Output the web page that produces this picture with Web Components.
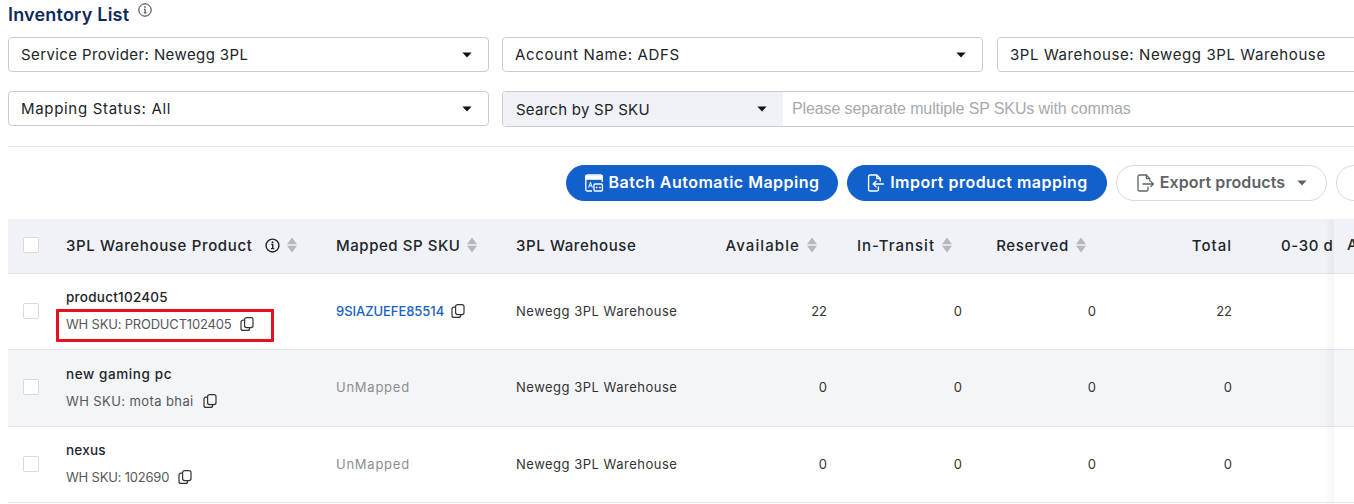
<!DOCTYPE html>
<html>
<head>
<meta charset="utf-8">
<title>Inventory List</title>
<style>
  html, body { margin: 0; padding: 0; background: #fff; overflow: hidden; }
  body { width: 1354px; height: 504px; font-family: "Inter", "Liberation Sans", sans-serif; color: #212529; }
</style>
</head>
<body>
<inv-page></inv-page>

<script>
const ICONS = {
  copy: `<svg width="16" height="16" viewBox="0 0 16 16" fill="none" stroke="currentColor" stroke-width="1.2" stroke-linejoin="round"><rect x="5.6" y="1.6" width="8.4" height="10" rx="2"/><path d="M5.6 4.2H4a2 2 0 0 0-2 2V12.4a2 2 0 0 0 2 2h4.6a2 2 0 0 0 2-2v-.8"/></svg>`,
  sort: `<svg width="12" height="16" viewBox="0 0 12 16" fill="#b4b7bd"><path d="M6 .5l5 6.8H1zM6 15.5L1 8.7h10z"/></svg>`,
  caret: `<svg width="10" height="6" viewBox="0 0 10 6" fill="currentColor"><path d="M0.4 0.6h9.2L5 5.6z"/></svg>`,
  info: `<svg width="14" height="14" viewBox="0 0 14 14" fill="none" stroke="currentColor"><circle cx="7" cy="7" r="6.2" stroke-width="1"/><path d="M6 6.2h1.1v3.6M5.8 9.9h2.6" stroke-width="1"/><circle cx="7" cy="4.1" r=".8" fill="currentColor" stroke="none"/></svg>`,
  infoBold: `<svg width="15" height="15" viewBox="0 0 14 14" fill="none" stroke="currentColor"><circle cx="7" cy="7" r="6" stroke-width="1.3"/><path d="M5.9 6.1h1.3v3.7M5.6 9.9h3" stroke-width="1.3"/><circle cx="7" cy="3.9" r=".95" fill="currentColor" stroke="none"/></svg>`,
  batch: `<svg width="20" height="20" viewBox="0 0 20 20" fill="none" stroke="#fff" stroke-width="1.3"><path d="M8 18H3.4A1.6 1.6 0 0 1 1.8 16.4V3.4A1.6 1.6 0 0 1 3.4 1.8h13.2a1.6 1.6 0 0 1 1.6 1.6V9"/><path d="M2 3h16v3.2H2z" fill="#fff"/><path d="M4.6 14.6l1.9-5.2 1.9 5.2M5.3 12.8h2.4" stroke-width="1"/><rect x="10" y="11" width="8.4" height="7" rx="1" fill="#1160cc"/><path d="M11.8 14.5h1.8M15 14.5h1.8M12.7 13.6v1.8M15.9 13.6v1.8" stroke-width=".9"/></svg>`,
  import: `<svg width="20" height="20" viewBox="0 0 20 20" fill="none" stroke="#fff" stroke-width="1.4" stroke-linecap="round" stroke-linejoin="round"><path d="M11.8 2H5.2A1.6 1.6 0 0 0 3.6 3.6v12.8A1.6 1.6 0 0 0 5.2 18h6.6a1.6 1.6 0 0 0 1.6-1.6V14M11.8 2l3.4 3.6V8M11.8 2v3.6h3.4"/><path d="M18.4 11H8.4M11 8.2L8.2 11l2.8 2.8"/></svg>`,
  export: `<svg width="20" height="20" viewBox="0 0 20 20" fill="none" stroke="currentColor" stroke-width="1.3" stroke-linecap="round" stroke-linejoin="round"><path d="M11.4 2H4.6A1.6 1.6 0 0 0 3 3.6v12.8A1.6 1.6 0 0 0 4.6 18h6.8a1.6 1.6 0 0 0 1.6-1.6V14M11.4 2l3.4 3.6V8M11.4 2v3.6h3.4"/><path d="M8 11h10.4M15.8 8.4l2.6 2.6-2.6 2.6"/></svg>`
};

class InvSelect extends HTMLElement {
  constructor() {
    super();
    this.attachShadow({ mode: 'open' });
  }
  connectedCallback() {
    this.shadowRoot.innerHTML = `
      <style>
        :host { display: flex; align-items: center; justify-content: space-between; box-sizing: border-box;
          height: 35px; padding: 0 16px 0 12px; border: 1px solid #c9ccd1; border-radius: 4px; background: #fff;
          font-size: 15px; color: #212529; white-space: nowrap; }
        svg { color: #111; display: block; }
      </style>
      <slot></slot>${ICONS.caret}`;
  }
}
customElements.define('inv-select', InvSelect);

class InvSearch extends HTMLElement {
  constructor() {
    super();
    this.attachShadow({ mode: 'open' });
  }
  connectedCallback() {
    this.shadowRoot.innerHTML = `
      <style>
        :host { display: flex; box-sizing: border-box; height: 36px; border: 1px solid #c9ccd1; border-radius: 4px;
          background: #fff; font-size: 15px; white-space: nowrap; overflow: hidden; }
        .by { flex: 0 0 280px; box-sizing: border-box; display: flex; align-items: center; justify-content: space-between;
          padding: 0 16px 0 13px; background: #f0f2f8; color: #212529; letter-spacing: .25px; }
        .by svg { color: #111; display: block; }
        .ph { display: flex; align-items: center; padding-left: 9px; color: #a6a9ae; font-family: "Liberation Sans", sans-serif;
          font-size: 16px; letter-spacing: -.12px; }
      </style>
      <div class="by"><slot name="by"></slot>${ICONS.caret}</div>
      <div class="ph"><slot name="ph"></slot></div>`;
  }
}
customElements.define('inv-search', InvSearch);

class InvButton extends HTMLElement {
  constructor() {
    super();
    this.attachShadow({ mode: 'open' });
  }
  connectedCallback() {
    const icon = this.getAttribute('icon');
    const outline = this.hasAttribute('outline');
    this.shadowRoot.innerHTML = `
      <style>
        :host { display: inline-flex; flex: none; align-items: center; justify-content: center; gap: 5px; box-sizing: border-box; height: 36px;
          border-radius: 18px; white-space: nowrap; font-size: 16px; font-weight: 600;
          letter-spacing: ${outline ? '.1px' : '.49px'};
          background: ${outline ? '#fff' : '#1160cc'}; color: ${outline ? '#5f6368' : '#fff'};
          border: 1px solid ${outline ? '#d9dadd' : '#1160cc'}; }
        svg { display: block; flex: none; }
        .label { margin-top: -2px; }
        .icon { display: flex; margin-left: -1px; }
        .caret { margin-left: 7px; display: flex; }
      </style>
      ${icon ? `<span class="icon">${ICONS[icon]}</span>` : ''}<span class="label"><slot></slot></span>
      ${this.hasAttribute('caret') ? `<span class="caret">${ICONS.caret}</span>` : ''}`;
  }
}
customElements.define('inv-button', InvButton);

class InvCheck extends HTMLElement {
  constructor() {
    super();
    this.attachShadow({ mode: 'open' });
  }
  connectedCallback() {
    this.shadowRoot.innerHTML = `
      <style>
        :host { display: block; box-sizing: border-box; width: 16px; height: 16px; background: #fff;
          border: 1px solid #d8dade; border-radius: 2px; }
      </style>`;
  }
}
customElements.define('inv-check', InvCheck);

// one row of the table, head or body, cells are passed in as children
class InvRow extends HTMLElement {
  constructor() {
    super();
    this.attachShadow({ mode: 'open' });
  }
  connectedCallback() {
    const head = this.hasAttribute('head');
    const hover = this.hasAttribute('hover');
    this.shadowRoot.innerHTML = `
      <style>
        :host { display: grid; grid-template-columns: 58px 270px 180px 186px 135px 135px 134px 136px 91px;
          align-items: center; box-sizing: border-box; width: 1400px; padding-bottom: 2px;
          height: ${this.getAttribute('h') || 76}px; border-bottom: 1px solid #e3e4e8;
          background: ${head ? '#f0f2f8' : hover ? '#f4f5f9' : '#fff'}; }
        ::slotted(*) { min-width: 0; }
      </style>
      <slot></slot>`;
  }
}
customElements.define('inv-row', InvRow);

class InvHead extends HTMLElement {
  constructor() {
    super();
    this.attachShadow({ mode: 'open' });
  }
  connectedCallback() {
    const right = this.hasAttribute('right');
    const info = this.hasAttribute('info');
    const sort = this.hasAttribute('sort');
    this.shadowRoot.innerHTML = `
      <style>
        :host { display: flex; align-items: center; gap: 6px; font-size: 15px; font-weight: 500; color: #212529; white-space: nowrap;
          ${right ? `justify-content: flex-end; padding-right: ${sort ? 19 : 10}px;` : ''} }
        svg { display: block; flex: none; }
        .info { color: #222; margin-left: 6px; display: flex; }
      </style>
      <slot></slot>
      ${info ? `<span class="info">${ICONS.infoBold}</span>` : ''}
      ${sort ? ICONS.sort : ''}`;
  }
}
customElements.define('inv-head', InvHead);

class InvProduct extends HTMLElement {
  constructor() {
    super();
    this.attachShadow({ mode: 'open' });
  }
  connectedCallback() {
    this.shadowRoot.innerHTML = `
      <style>
        :host { display: block; white-space: nowrap; }
        .name { font-size: 13.5px; font-weight: 500; color: #212529; line-height: 18px; }
        .sku { display: flex; align-items: center; gap: 8px; margin-top: 9px; font-size: 13px; color: #55585c; line-height: 18px; }
        .sku span { color: #333; display: flex; }
      </style>
      <div class="name"><slot name="name"></slot></div>
      <div class="sku"><slot name="sku"></slot><span>${ICONS.copy}</span></div>`;
  }
}
customElements.define('inv-product', InvProduct);

class InvNum extends HTMLElement {
  constructor() {
    super();
    this.attachShadow({ mode: 'open' });
  }
  connectedCallback() {
    this.shadowRoot.innerHTML = `
      <style>:host { display: block; text-align: right; padding-right: 10px; font-size: 13px; color: #333; }</style>
      <slot></slot>`;
  }
}
customElements.define('inv-num', InvNum);

class InvCell extends HTMLElement {
  constructor() {
    super();
    this.attachShadow({ mode: 'open' });
  }
  connectedCallback() {
    const link = this.hasAttribute('link');
    const muted = this.hasAttribute('muted');
    this.shadowRoot.innerHTML = `
      <style>
        :host { display: flex; align-items: center; gap: 6px; font-size: 13px; white-space: nowrap;
          letter-spacing: ${link ? '-.05px' : muted ? '.75px' : '.5px'};
          color: ${link ? '#1a5fbf' : muted ? '#8b8e93' : '#333'}; font-weight: ${link ? 500 : 400}; }
        span { color: #333; display: flex; }
      </style>
      <slot></slot>${link ? `<span>${ICONS.copy}</span>` : ''}`;
  }
}
customElements.define('inv-cell', InvCell);

class InvPage extends HTMLElement {
  constructor() {
    super();
    this.attachShadow({ mode: 'open' });
  }
  rowHtml(name, sku, mapped, nums, opts) {
    return `
      <inv-row ${opts.hover ? 'hover' : ''} h="${opts.h}">
        <div class="chk"><inv-check></inv-check></div>
        <inv-product>
          <span slot="name" style="letter-spacing:${opts.nameLs}px">${name}</span>
          <span slot="sku" style="letter-spacing:${opts.skuLs}px">${sku}</span>
        </inv-product>
        ${mapped ? `<inv-cell link>${mapped}</inv-cell>` : `<inv-cell muted>UnMapped</inv-cell>`}
        <inv-cell>Newegg 3PL Warehouse</inv-cell>
        <inv-num>${nums[0]}</inv-num>
        <inv-num>${nums[1]}</inv-num>
        <inv-num>${nums[2]}</inv-num>
        <inv-num>${nums[3]}</inv-num>
      </inv-row>`;
  }
  connectedCallback() {
    this.shadowRoot.innerHTML = `
      <style>
        :host { display: block; width: 1354px; height: 504px; overflow: hidden; position: relative; }
        .wrap { padding-left: 8px; width: 1500px; }
        h1 { margin: 0; height: 37px; display: flex; align-items: flex-start; font-size: 18px; font-weight: 600; color: #0e2a5c; line-height: 30px; letter-spacing: .2px; }
        h1 svg { margin: 3px 0 0 9px; color: #333; }
        .filters { display: grid; grid-template-columns: 481px 481px 481px; column-gap: 13px; row-gap: 19px; }
        hr { border: 0; border-top: 1px solid #e3e4e8; margin: 19px 0 18px; }
        .tools { display: flex; gap: 9px; padding-left: 558px; height: 36px; margin-bottom: 18px; }
        .tools inv-button:nth-child(1) { width: 272px; }
        .tools inv-button:nth-child(2) { width: 260px; }
        .tools inv-button:nth-child(3) { width: 211px; }
        .tools inv-button:nth-child(4) { width: 200px; }
        .chk { padding-left: 15px; }
        .sticky { position: absolute; top: 219px; left: 1334px; width: 60px; height: 285px; background: #fff;
          box-shadow: -6px 0 6px rgba(0,0,0,.035); }
        .sticky div { height: 52px; background: #f0f2f8; border-bottom: 1px solid #e3e4e8; padding: 0 0 2px 13px;
          font-size: 15px; font-weight: 500; line-height: 52px; color: #212529; }
        .sticky .r { height: 75px; padding: 0; }
        .sticky .r.w { background: #fff; }
        .sticky .r.g { background: #f4f5f9; }
      </style>
      <div class="wrap">
        <h1>Inventory List ${ICONS.info}</h1>
        <div class="filters">
          <inv-select style="letter-spacing:.4px">Service Provider: Newegg 3PL</inv-select>
          <inv-select style="letter-spacing:.65px">Account Name: ADFS</inv-select>
          <inv-select style="letter-spacing:.6px;margin-left:1px">3PL Warehouse: Newegg 3PL Warehouse</inv-select>
          <inv-select style="letter-spacing:.68px">Mapping Status: All</inv-select>
          <inv-search style="grid-column: span 2">
            <span slot="by">Search by SP SKU</span>
            <span slot="ph">Please separate multiple SP SKUs with commas</span>
          </inv-search>
        </div>
        <hr>
        <div class="tools">
          <inv-button icon="batch">Batch Automatic Mapping</inv-button>
          <inv-button icon="import">Import product mapping</inv-button>
          <inv-button icon="export" outline caret>Export products</inv-button>
          <inv-button outline></inv-button>
        </div>
        <inv-row head h="55">
          <div class="chk"><inv-check></inv-check></div>
          <inv-head info sort style="letter-spacing:.65px">3PL Warehouse Product</inv-head>
          <inv-head sort style="letter-spacing:.55px">Mapped SP SKU</inv-head>
          <inv-head style="letter-spacing:.6px">3PL Warehouse</inv-head>
          <inv-head right sort style="letter-spacing:1.1px">Available</inv-head>
          <inv-head right sort style="letter-spacing:1px">In-Transit</inv-head>
          <inv-head right sort style="letter-spacing:.65px">Reserved</inv-head>
          <inv-head right style="letter-spacing:1px">Total</inv-head>
          <inv-head style="padding-left:39px;letter-spacing:.6px">0-30 d</inv-head>
        </inv-row>
        ${this.rowHtml('product102405', 'WH SKU: PRODUCT102405', '9SIAZUEFE85514', [22, 0, 0, 22], { h: 76, nameLs: .25, skuLs: -.2 })}
        ${this.rowHtml('new gaming pc', 'WH SKU: mota bhai', '', [0, 0, 0, 0], { h: 77, hover: true, nameLs: .6, skuLs: .4 })}
        ${this.rowHtml('nexus', 'WH SKU: 102690', '', [0, 0, 0, 0], { h: 76, nameLs: .2, skuLs: -.2 })}
      </div>
      <div class="sticky">
        <div>A</div>
        <div class="r w"></div>
        <div class="r g" style="height:76px"></div>
        <div class="r w"></div>
      </div>
      <div style="position:absolute;left:56px;top:309px;width:218px;height:33px;box-sizing:border-box;border:3px solid #e8101c;border-radius:1px"></div>`;
  }
}
customElements.define('inv-page', InvPage);
</script>
</body>
</html>
